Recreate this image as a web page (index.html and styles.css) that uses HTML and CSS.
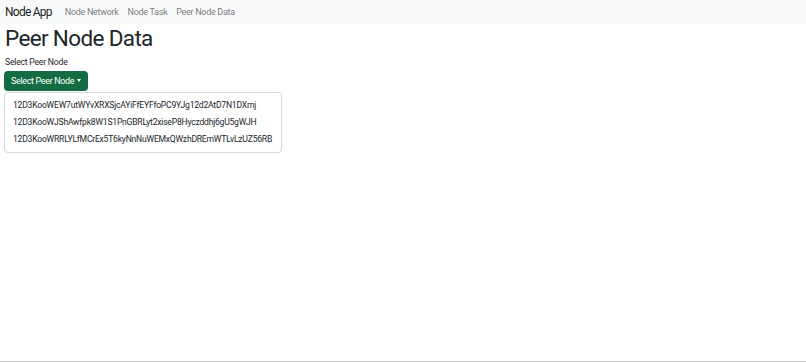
FILE: index.html
```html
<!DOCTYPE html>
<html lang="en">
<head>
    <meta charset="UTF-8">
    <meta name="viewport" content="width=device-width, initial-scale=1.0">
    <title>Node App</title>
    <link rel="stylesheet" href="styles.css">
</head>
<body>
    <nav class="navbar">
        <a class="brand" href="#">Node App</a>
        <div class="nav-links">
            <a href="#">Node Network</a>
            <a href="#">Node Task</a>
            <a href="#">Peer Node Data</a>
        </div>
    </nav>
    <div class="main-content">
        <h1>Peer Node Data</h1>
        <label class="field-label">Select Peer Node</label>
        <div class="dropdown">
            <button class="btn-select">Select Peer Node <span class="caret"></span></button>
            <ul class="dropdown-menu">
                <li>12D3KooWEW7utWYvXRXSjcAYiFfEYFfoPC9YJg12d2AtD7N1DXmj</li>
                <li>12D3KooWJShAwfpk8W1S1PnGBRLyt2xiseP8Hyczddhj6gU5gWJH</li>
                <li>12D3KooWRRLYLfMCrEx5T6kyNnNuWEMxQWzhDREmWTLvLzUZ56RB</li>
            </ul>
        </div>
    </div>
</body>
</html>
```

FILE: styles.css
```css
html, body {
    height: 100%;
}

body {
    font-family: Roboto, 'Noto Sans', sans-serif;
    margin: 0;
    padding: 0;
    background-color: #fff;
    color: #212529;
    box-sizing: border-box;
    border-bottom: 1px solid #cfcfcf;
}

.navbar {
    display: flex;
    align-items: center;
    height: 24px;
    padding: 0 5px 1px;
    box-sizing: border-box;
    background-color: #f8f9fa;
}

.brand {
    font-size: 12px;
    letter-spacing: -0.75px;
    color: rgba(0, 0, 0, 0.9);
    text-decoration: none;
    margin-right: 13px;
}

.nav-links {
    display: flex;
    gap: 9px;
}

.nav-links a {
    font-size: 9px;
    letter-spacing: -0.3px;
    color: rgba(0, 0, 0, 0.55);
    text-decoration: none;
}

.main-content {
    padding: 0 4px;
}

h1 {
    font-size: 22.5px;
    font-weight: 400;
    letter-spacing: -0.65px;
    line-height: 1.2;
    margin: 1px 0 5px 1px;
}

.field-label {
    display: block;
    font-size: 8.6px;
    letter-spacing: -0.2px;
    margin-left: 1px;
    margin-bottom: 2px;
}

.btn-select {
    display: inline-flex;
    align-items: center;
    gap: 3px;
    height: 20px;
    padding: 0 7px;
    font-family: inherit;
    font-size: 9px;
    letter-spacing: -0.35px;
    color: #fff;
    background-color: #146c43;
    border: none;
    border-radius: 4px;
    cursor: pointer;
}

.caret {
    width: 0;
    height: 0;
    border-left: 2.5px solid transparent;
    border-right: 2.5px solid transparent;
    border-top: 3px solid #fff;
    margin-top: -1px;
}

.dropdown-menu {
    list-style: none;
    width: 276px;
    margin: 1px 0 0;
    padding: 4px 0;
    border: 1px solid rgba(0, 0, 0, 0.15);
    border-radius: 4px;
}

.dropdown-menu li {
    font-size: 8.6px;
    letter-spacing: -0.23px;
    line-height: 17px;
    padding: 0 8px;
    white-space: nowrap;
}
```
